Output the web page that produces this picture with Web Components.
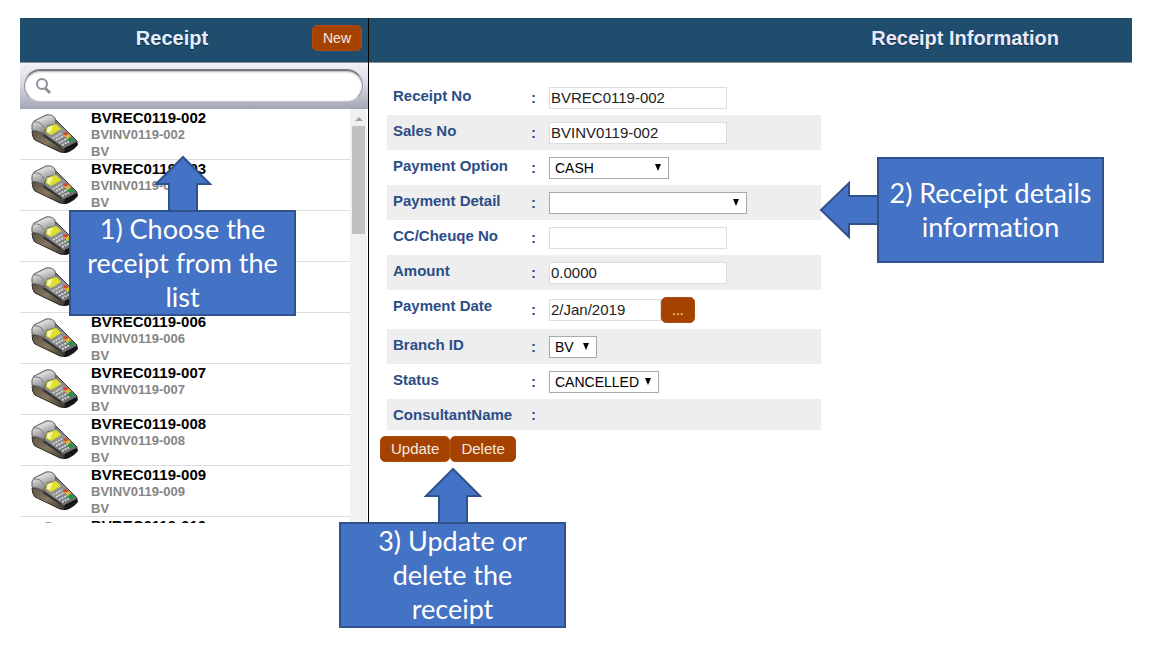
<!DOCTYPE html>
<html lang="en">
<head>
<meta charset="utf-8">
<title>Receipt</title>
<style>
  body {
    margin: 0;
    background: #fff;
    font-family: "Liberation Sans", Arial, sans-serif;
  }
</style>
</head>
<body>
<receipt-page></receipt-page>

<script>
/**
 * Bar across the top of a pane, with room for an action button
 */
class PaneHeader extends HTMLElement {
  constructor() {
    super();
    this.attachShadow({ mode: 'open' }).innerHTML = `
      <style>
        :host {
          display: flex;
          align-items: center;
          box-sizing: border-box;
          height: 45px;
          padding: 0 6px 4px 12px;
          background: #204c6e;
          border-bottom: 1px solid #8c9096;
        }
        :host([wide]) { padding: 0 73px 4px; }
        h1 {
          flex: 1;
          margin: 0;
          font-size: 20px;
          line-height: 24px;
          text-align: center;
          color: #e2f0ff;
          text-shadow: 0 1px 1px rgba(0, 0, 0, 0.4);
        }
        :host([wide]) h1 { text-align: right; color: #e9e9fb; }
      </style>
      <h1><slot></slot></h1>
      <slot name="action"></slot>
    `;
  }
}
customElements.define('pane-header', PaneHeader);

class ActionButton extends HTMLElement {
  constructor() {
    super();
    this.attachShadow({ mode: 'open' }).innerHTML = `
      <style>
        :host { display: block; }
        button {
          display: block;
          height: 26px;
          padding: 0 10px;
          border: 1px solid #ac4c10;
          border-radius: 5px;
          background: #a64200;
          color: #f6e9e0;
          font: 15px/24px "Liberation Sans", Arial, sans-serif;
        }
        :host([compact]) button { font-size: 14px; }
      </style>
      <button type="button"><slot></slot></button>
    `;
  }
}
customElements.define('action-button', ActionButton);

class SearchBar extends HTMLElement {
  constructor() {
    super();
    this.attachShadow({ mode: 'open' }).innerHTML = `
      <style>
        :host {
          display: block;
          padding: 6px 5px 7px 4px;
          background: linear-gradient(#f1f2f6, #d5d7df 50%, #a1a5b5);
        }
        label {
          display: flex;
          align-items: center;
          box-sizing: border-box;
          height: 33px;
          padding: 0 12px 0 10px;
          border: 1px solid #8f9195;
          border-top: 2px solid #77787b;
          border-bottom-color: #c4c6cc;
          border-radius: 17px;
          background: #fff;
          box-shadow: inset 0 1px 2px #b5b5b5;
        }
        input {
          flex: 1;
          min-width: 0;
          border: 0;
          outline: 0;
          background: none;
          font: 15px "Liberation Sans", Arial, sans-serif;
        }
      </style>
      <label>
        <svg width="17" height="18" viewBox="0 0 17 18" fill="none" stroke="#8c909b" aria-label="Search">
          <circle cx="7" cy="7" r="5" stroke-width="2"/>
          <path d="M10 11L15 16" stroke-width="3"/>
        </svg>
        <input type="text" aria-label="Search receipts">
      </label>
    `;
  }
}
customElements.define('search-bar', SearchBar);

/**
 * One receipt in the list: card terminal picture and three lines of text
 */
class ReceiptItem extends HTMLElement {
  constructor() {
    super();
    this.attachShadow({ mode: 'open' });
  }

  connectedCallback() {
    const no = this.getAttribute('no');
    this.shadowRoot.innerHTML = `
      <style>
        :host {
          display: flex;
          box-sizing: border-box;
          height: 51px;
          padding-left: 11px;
          gap: 12px;
          border-bottom: 1px solid #dcdcdc;
        }
        svg { display: block; flex: none; margin-top: 5px; }
        .text {
          font-weight: bold;
          font-size: 13px;
          line-height: 17px;
          color: #858585;
        }
        .no { font-size: 15px; color: #000; }
      </style>
      <svg width="48" height="42" viewBox="0 0 48 42">
        <defs>
          <linearGradient id="hood" x1="0" y1="0" x2=".5" y2="1">
            <stop offset="0" stop-color="#777"/><stop offset=".35" stop-color="#dcdcde"/><stop offset="1" stop-color="#77787a"/>
          </linearGradient>
          <linearGradient id="face" x1="0" y1="0" x2="1" y2="1">
            <stop offset="0" stop-color="#66686b"/><stop offset=".5" stop-color="#929497"/><stop offset="1" stop-color="#55575a"/>
          </linearGradient>
          <linearGradient id="base" x1="0" y1="0" x2="1" y2="1">
            <stop offset="0" stop-color="#5c5346"/><stop offset=".5" stop-color="#85775f"/><stop offset="1" stop-color="#3b3630"/>
          </linearGradient>
        </defs>
        <path d="M2 20L10 17L37 33L46 27L47 31Q43 36 38 38Q34 40 29 38L4 26Q1 24 2 20Z" fill="#171717"/>
        <path d="M1 17L11 18L34 32L33 38L29 38L4 26Q1 23 1 17Z" fill="url(#base)" stroke="#39342c"/>
        <path d="M12 12L25 6L46 27Q46 30 43 31L36 35Q32 35 29 33L12 22Z" fill="url(#face)" stroke="#38393b"/>
        <path d="M13 21L30 33" stroke="#333436" stroke-width="2"/>
        <path d="M34 35L46 29" stroke="#111" stroke-width="2"/>
        <path d="M1 16Q0 10 3 7L15 1Q21 0 24 4L25 10L16 12L13 20Q7 17 1 16Z" fill="url(#hood)" stroke="#5c5c5c"/>
        <path d="M3 8Q10 7 13 14" fill="none" stroke="#787878"/>
        <path d="M16 13L25 10L30 15L20 21L15 18Z" fill="#dfe02c" stroke="#c4c450"/>
        <path d="M17 13L22 12L19 19L16 18Z" fill="#f6f6a4"/>
        <path d="M22 24L31 19M25 26L34 21M28 29L37 24M31 31L39 27" stroke="#d4d4d4" stroke-width="2" stroke-dasharray="2 1"/>
        <path d="M23 25L32 20M26 28L35 23M29 30L38 26" stroke="#626467" stroke-dasharray="1 2"/>
        <path d="M32 19L35 18L37 20L34 22Z" fill="#e04525"/>
        <path d="M34 22L38 20L40 22L36 25Z" fill="#e8b825"/>
        <path d="M36 26L40 23L43 26L39 28Z" fill="#199c39"/>
      </svg>
      <div class="text">
        <div class="no">BVREC0119-${no}</div>
        <div>BVINV0119-${no}</div>
        <div>BV</div>
      </div>
    `;
  }
}
customElements.define('receipt-item', ReceiptItem);

class ReceiptList extends HTMLElement {
  constructor() {
    super();
    const numbers = ['002', '003', '004', '005', '006', '007', '008', '009', '010'];
    this.attachShadow({ mode: 'open' }).innerHTML = `
      <style>
        :host {
          display: flex;
          height: 414px;
          overflow: hidden;
        }
        .items { flex: 1; }
        .scrollbar {
          width: 17px;
          margin-right: 1px;
          background: #f1f1f1;
        }
        .arrow { display: block; margin: 0 auto; }
        .thumb { height: 108px; margin: 0 2px; background: #c1c1c1; }
      </style>
      <div class="items">
        ${numbers.map(n => `<receipt-item no="${n}"></receipt-item>`).join('')}
      </div>
      <div class="scrollbar">
        <svg class="arrow" width="8" height="17" viewBox="0 0 8 17"><path d="M0 12L4 8L8 12Z" fill="#a3a3a3"/></svg>
        <div class="thumb"></div>
      </div>
    `;
  }
}
customElements.define('receipt-list', ReceiptList);

/**
 * Label, colon and control. kind is "text", "select" or empty;
 * size is one of the widths in the style sheet.
 */
class FieldRow extends HTMLElement {
  constructor() {
    super();
    this.attachShadow({ mode: 'open' });
  }

  connectedCallback() {
    const label = this.getAttribute('label');
    const kind = this.getAttribute('kind');
    const value = this.getAttribute('value') || '';
    const size = this.getAttribute('size') || 'm';

    let control = '<output id="field"></output>';
    if (kind === 'text') {
      control = `<input id="field" class="${size}" type="text" value="${value}">`;
    } else if (kind === 'select') {
      control = `
        <span class="select ${size}">
          <select id="field"><option>${value}</option></select>
          <svg width="8" height="7" viewBox="0 0 8 7"><path d="M1 0H7L4 7Z"/></svg>
        </span>`;
    }

    this.shadowRoot.innerHTML = `
      <style>
        :host {
          display: grid;
          grid-template-columns: 138px 18px 1fr;
          box-sizing: border-box;
          min-height: 35px;
          padding-left: 6px;
          color: #2c4d88;
          font-weight: bold;
          font-size: 15px;
          line-height: 18px;
        }
        :host([shaded]) { background: #eee; }
        :host([tall]) { min-height: 39px; }
        :host([short]) { min-height: 31px; }
        label { padding-top: 7px; }
        .colon { align-self: center; }
        .control { display: flex; align-items: center; }
        input, .select {
          box-sizing: border-box;
          height: 22px;
          background: #fff;
        }
        input {
          padding: 0 1px;
          border: 1px solid #dcdcdc;
          color: #222;
          font: 15px "Liberation Sans", Arial, sans-serif;
        }
        .select {
          display: grid;
          align-items: center;
          border: 1px solid #a9a9a9;
        }
        select, .select svg { grid-area: 1 / 1; }
        .select svg { justify-self: end; margin-right: 6px; pointer-events: none; }
        select {
          width: 100%;
          height: 20px;
          padding: 0 5px;
          border: 0;
          appearance: none;
          background: none;
          color: #000;
          font: 14px "Liberation Sans", Arial, sans-serif;
        }
        .xs { width: 48px; }
        .s { width: 110px; }
        .sm { width: 112px; }
        .md { width: 120px; }
        .m { width: 178px; }
        .l { width: 198px; }
      </style>
      <label for="field">${label}</label>
      <span class="colon">:</span>
      <div class="control">${control}<slot></slot></div>
    `;
  }
}
customElements.define('field-row', FieldRow);

class ReceiptForm extends HTMLElement {
  constructor() {
    super();
    this.attachShadow({ mode: 'open' }).innerHTML = `
      <style>
        :host { display: block; padding: 17px 11px 0; }
        .fields { max-width: 434px; margin-left: 7px; }
        .actions { display: flex; padding-top: 6px; }
      </style>
      <form>
        <div class="fields">
          <field-row label="Receipt No" kind="text" value="BVREC0119-002"></field-row>
          <field-row label="Sales No" kind="text" value="BVINV0119-002" shaded></field-row>
          <field-row label="Payment Option" kind="select" value="CASH" size="md"></field-row>
          <field-row label="Payment Detail" kind="select" size="l" shaded></field-row>
          <field-row label="CC/Cheuqe No" kind="text"></field-row>
          <field-row label="Amount" kind="text" value="0.0000" shaded></field-row>
          <field-row label="Payment Date" kind="text" value="2/Jan/2019" size="sm" tall>
            <action-button compact>...</action-button>
          </field-row>
          <field-row label="Branch ID" kind="select" value="BV" size="xs" shaded></field-row>
          <field-row label="Status" kind="select" value="CANCELLED" size="s"></field-row>
          <field-row label="ConsultantName" shaded short></field-row>
        </div>
        <div class="actions">
          <action-button>Update</action-button>
          <action-button>Delete</action-button>
        </div>
      </form>
    `;
  }
}
customElements.define('receipt-form', ReceiptForm);

/**
 * Help note with an arrow. point="up" or point="left".
 */
class HelpCallout extends HTMLElement {
  constructor() {
    super();
    this.attachShadow({ mode: 'open' });
  }

  connectedCallback() {
    const arrow = this.getAttribute('point') === 'left'
      ? '<svg width="58" height="58" viewBox="0 0 58 58"><path d="M58 15H30V2L2 29L30 56V43H58"/></svg>'
      : '<svg width="58" height="55" viewBox="0 0 58 55"><path d="M15 55V29H2L29 2L56 29H43V55"/></svg>';
    this.shadowRoot.innerHTML = `
      <style>
        :host {
          position: absolute;
          display: flex;
          flex-direction: column;
          align-items: center;
        }
        :host([point="left"]) { flex-direction: row; }
        svg { display: block; flex: none; fill: #4472c4; stroke: #2f528f; stroke-width: 2; }
        .note {
          display: flex;
          align-items: center;
          justify-content: center;
          box-sizing: border-box;
          width: 227px;
          height: 106px;
          border: 2px solid #2f528f;
          background: #4472c4;
          color: #fff;
          font: 27px/34px Lato, Carlito, sans-serif;
          font-variant-ligatures: none;
          text-align: center;
          white-space: nowrap;
        }
      </style>
      ${arrow}
      <div class="note"><span><slot></slot></span></div>
    `;
  }
}
customElements.define('help-callout', HelpCallout);

class ReceiptPage extends HTMLElement {
  constructor() {
    super();
    this.attachShadow({ mode: 'open' }).innerHTML = `
      <style>
        :host {
          display: block;
          position: relative;
          box-sizing: border-box;
          min-height: 100vh;
          padding: 18px 33px 0 20px;
        }
        main { display: flex; }
        .list {
          flex: none;
          width: 348px;
          border-right: 1px solid #000;
        }
        .detail { flex: 1; min-width: 0; }
        .choose { left: 69px; top: 155px; }
        .details { left: 819px; top: 157px; }
        .update { left: 339px; top: 467px; }
      </style>
      <main>
        <section class="list">
          <pane-header>Receipt<action-button slot="action" compact>New</action-button></pane-header>
          <search-bar></search-bar>
          <receipt-list></receipt-list>
        </section>
        <section class="detail">
          <pane-header wide>Receipt Information</pane-header>
          <receipt-form></receipt-form>
        </section>
      </main>
      <help-callout class="choose" point="up">1) Choose the<br>receipt from the<br>list</help-callout>
      <help-callout class="details" point="left">2) Receipt details<br>information</help-callout>
      <help-callout class="update" point="up">3) Update or<br>delete the<br>receipt</help-callout>
    `;
  }
}
customElements.define('receipt-page', ReceiptPage);
</script>
</body>
</html>
